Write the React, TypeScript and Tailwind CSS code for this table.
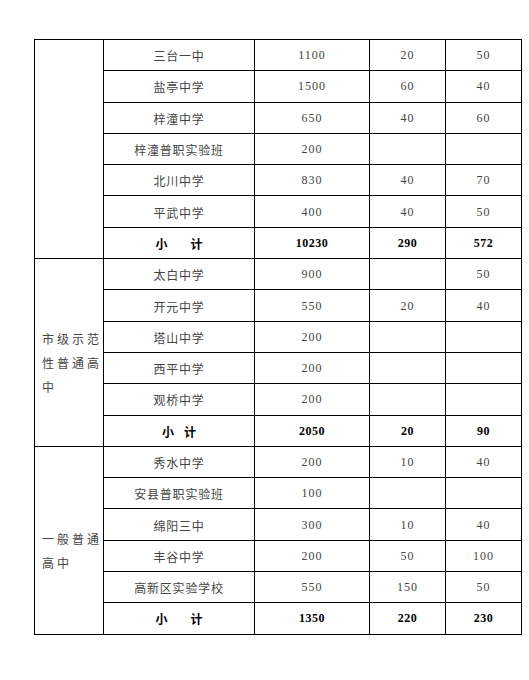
import React from "react";

type Row = { name: string; a: string; b: string; c: string; total?: boolean; gap?: number };

const groups: { label: string; rows: Row[] }[] = [
  {
    label: "",
    rows: [
      { name: "三台一中", a: "1100", b: "20", c: "50" },
      { name: "盐亭中学", a: "1500", b: "60", c: "40" },
      { name: "梓潼中学", a: "650", b: "40", c: "60" },
      { name: "梓潼普职实验班", a: "200", b: "", c: "" },
      { name: "北川中学", a: "830", b: "40", c: "70" },
      { name: "平武中学", a: "400", b: "40", c: "50" },
      { name: "", a: "10230", b: "290", c: "572", total: true, gap: 23 },
    ],
  },
  {
    label: "市级示范性普通高中",
    rows: [
      { name: "太白中学", a: "900", b: "", c: "50" },
      { name: "开元中学", a: "550", b: "20", c: "40" },
      { name: "塔山中学", a: "200", b: "", c: "" },
      { name: "西平中学", a: "200", b: "", c: "" },
      { name: "观桥中学", a: "200", b: "", c: "" },
      { name: "", a: "2050", b: "20", c: "90", total: true, gap: 10 },
    ],
  },
  {
    label: "一般普通高中",
    rows: [
      { name: "秀水中学", a: "200", b: "10", c: "40" },
      { name: "安县普职实验班", a: "100", b: "", c: "" },
      { name: "绵阳三中", a: "300", b: "10", c: "40" },
      { name: "丰谷中学", a: "200", b: "50", c: "100" },
      { name: "高新区实验学校", a: "550", b: "150", c: "50" },
      { name: "", a: "1350", b: "220", c: "230", total: true, gap: 23 },
    ],
  },
];

const cjk = "font-['Noto_Sans_CJK_SC',sans-serif]";
const num = "font-['Liberation_Serif','Noto_Sans_CJK_SC',serif]";

export default function App() {
  return (
    <div className="min-h-[680px] w-[529px] bg-white pt-[39px] pl-[34px]">
      <table className="w-[487px] table-fixed border-collapse border border-black">
        <colgroup>
          <col className="w-[69px]" />
          <col className="w-[151px]" />
          <col className="w-[115px]" />
          <col className="w-[76px]" />
          <col className="w-[76px]" />
        </colgroup>
        <tbody>
          {groups.map((g, gi) =>
            g.rows.map((r, ri) => (
              <tr key={`${gi}-${ri}`} className="h-[31.3px]">
                {ri === 0 && (
                  <td
                    rowSpan={g.rows.length}
                    className="border border-black p-0 align-middle"
                  >
                    <div
                      className={`${cjk} pl-[7px] pt-[22px] text-left text-[12px] leading-[24px] tracking-[3px] text-[#444]`}
                    >
                      {g.label}
                    </div>
                  </td>
                )}
                <td className="border border-black p-0 text-center align-middle">
                  {r.total ? (
                    <span className={`${cjk} text-[12px] font-bold text-black`}>
                      <span>小</span>
                      <span style={{ marginLeft: r.gap }}>计</span>
                    </span>
                  ) : (
                    <span className={`${cjk} text-[12px] tracking-[0.8px] text-[#444]`}>
                      {r.name}
                    </span>
                  )}
                </td>
                {[r.a, r.b, r.c].map((v, i) => (
                  <td
                    key={i}
                    className={`border border-black p-0 text-center align-middle ${num} text-[12px] ${
                      r.total
                        ? "font-bold tracking-[0.5px] text-black"
                        : "tracking-[1px] text-[#444]"
                    }`}
                  >
                    {v}
                  </td>
                ))}
              </tr>
            ))
          )}
        </tbody>
      </table>
    </div>
  );
}
